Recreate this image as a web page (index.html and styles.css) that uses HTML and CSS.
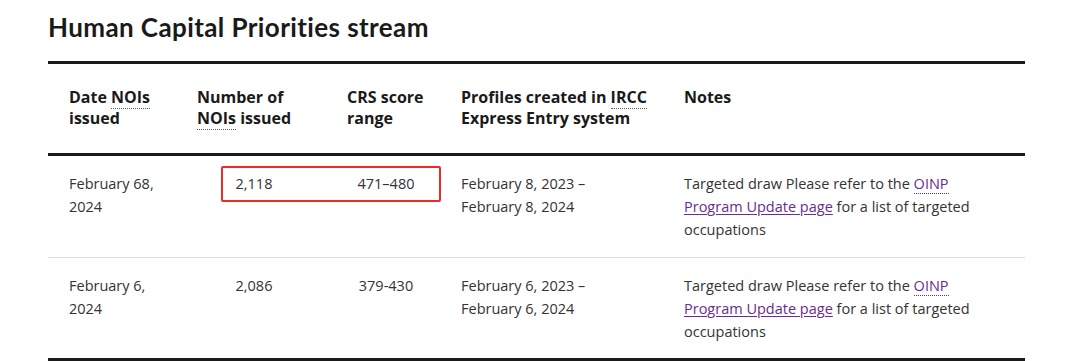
FILE: index.html
```html
<!DOCTYPE html>
<html lang="en">
<head>
<meta charset="utf-8">
<title>Human Capital Priorities stream</title>
<link rel="stylesheet" href="styles.css">
</head>
<body>
<main class="page">
  <h2 class="title">Human Capital Priorities stream</h2>
  <div class="table-wrap">
    <table class="draws">
      <colgroup>
        <col class="c1"><col class="c2"><col class="c3"><col class="c4"><col class="c5">
      </colgroup>
      <thead>
        <tr>
          <th>Date <abbr>NOIs</abbr> issued</th>
          <th>Number of <abbr>NOIs</abbr> issued</th>
          <th>CRS score range</th>
          <th>Profiles created in <abbr>IRCC</abbr> Express Entry system</th>
          <th>Notes</th>
        </tr>
      </thead>
      <tbody>
        <tr>
          <td>February 68, 2024</td>
          <td class="num">2,118</td>
          <td class="num">471–480</td>
          <td>February 8, 2023 – February 8, 2024</td>
          <td>Targeted draw Please refer to the <a href="#"><abbr>OINP</abbr> <span class="u">Program Update page</span></a> for a list of targeted occupations</td>
        </tr>
        <tr>
          <td>February 6, 2024</td>
          <td class="num">2,086</td>
          <td class="num">379-430</td>
          <td>February 6, 2023 – February 6, 2024</td>
          <td>Targeted draw Please refer to the <a href="#"><abbr>OINP</abbr> <span class="u">Program Update page</span></a> for a list of targeted occupations</td>
        </tr>
      </tbody>
    </table>
    <div class="highlight"></div>
  </div>
</main>
</body>
</html>
```
FILE: styles.css
```css
html, body {
  margin: 0;
  padding: 0;
  background: #ffffff;
}

.page {
  padding: 0 55px 0 48px;
  font-family: "Open Sans", "Noto Sans", sans-serif;
  color: #333333;
}

.title {
  margin: 0;
  padding-top: 12px;
  height: 61px;
  box-sizing: border-box;
  font-family: Lato, "Open Sans", sans-serif;
  font-weight: 700;
  font-size: 26px;
  letter-spacing: 0.4px;
  line-height: 30px;
  color: #1a1a1a;
}

.table-wrap {
  position: relative;
}

.draws {
  width: 977px;
  border-collapse: collapse;
  table-layout: fixed;
  border-top: 3px solid #1a1a1a;
  border-bottom: 3px solid #1a1a1a;
}

.c1 { width: 128px; }
.c2 { width: 150px; }
.c3 { width: 114px; }
.c4 { width: 223px; }
.c5 { width: 362px; }

.draws th {
  text-align: left;
  vertical-align: top;
  font-weight: 700;
  font-size: 16px;
  line-height: 21px;
  color: #1a1a1a;
  padding: 23px 10px 24px 21px;
  border-bottom: 3px solid #1a1a1a;
}

.draws td {
  vertical-align: top;
  font-size: 14.5px;
  line-height: 23px;
  padding: 16px 21px 16px 21px;
  border-bottom: 1px solid #dcdcdc;
}

.draws tbody tr:last-child td {
  border-bottom: none;
  padding-bottom: 15px;
}

.draws td.num {
  text-align: center;
  padding-left: 24px;
  padding-right: 18px;
}

abbr {
  text-decoration: none;
  border-bottom: 1px dotted #555555;
}

a {
  color: #6a2c91;
  text-decoration: none;
}

a abbr {
  border-bottom-color: #6a2c91;
}

a .u {
  text-decoration: underline;
  text-underline-offset: 2px;
}

.highlight {
  position: absolute;
  left: 173px;
  top: 105px;
  width: 220px;
  height: 36px;
  box-sizing: border-box;
  border: 2px solid #ee2a24;
  border-radius: 2px;
}
```
